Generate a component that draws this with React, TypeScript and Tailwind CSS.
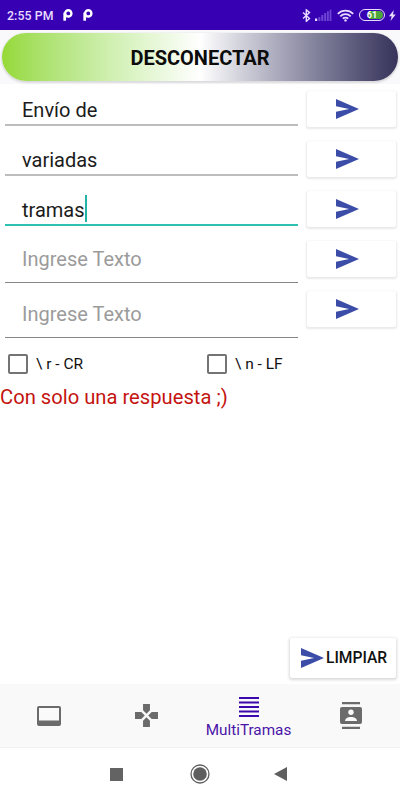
import type { ReactNode } from 'react'

type Field = {
  text: string
  state: 'filled' | 'focused' | 'empty'
  box: string
}

const fields: Field[] = [
  { text: 'Envío de', state: 'filled', box: 'h-[42px] pt-[9px] border-b-2 border-[#bdbdbd]' },
  { text: 'variadas', state: 'filled', box: 'h-[50px] pt-[17px] border-b-2 border-[#bdbdbd]' },
  { text: 'tramas', state: 'focused', box: 'h-[50px] pt-[17px] border-b-2 border-[#2fc0b4]' },
  { text: 'Ingrese Texto', state: 'empty', box: 'h-[57px] pt-[16px] border-b border-[#868686]' },
  { text: 'Ingrese Texto', state: 'empty', box: 'h-[55px] pt-[14px] border-b border-[#868686]' },
]

function SendIcon() {
  return (
    <svg className="block shrink-0" width="23" height="20" viewBox="2 3 21 18" preserveAspectRatio="none" fill="#3c4da8">
      <path d="M2 21 23 12 2 3v6.500l12 2.500-12 2.500z" />
    </svg>
  )
}

function AppBadge() {
  return (
    <svg width="10" height="12" viewBox="0 0 10 12" fill="none" stroke="#fff">
      <circle cx="5.3" cy="4.4" r="3.1" strokeWidth="2.4" />
      <path d="M1.7 3.6v8.1" strokeWidth="2.7" />
    </svg>
  )
}

function StatusBar() {
  return (
    <header className="flex h-[30px] items-center bg-[#3700b3] pl-[7px] pr-[4px] text-[#e9dcff]">
      <span className="w-[56px] whitespace-nowrap pt-[2px] text-[12.3px] font-medium tracking-[0.1px]">2:55 PM</span>
      <AppBadge />
      <span className="w-[10px]" />
      <AppBadge />
      <div className="ml-auto flex items-center">
        <svg width="9" height="13" viewBox="0 0 9 13" fill="none" stroke="currentColor" strokeWidth="1.4">
          <path d="m1 3.5 6.500 6-3.200 2.800V.8l3.200 2.800L1 9.500" />
        </svg>
        <svg className="ml-[4px]" width="17" height="12" viewBox="0 0 17 12" fill="#6e45d2">
          <path d="M0 9.5h2.2V12H0z" fill="#e9dcff" />
          <path d="M3.4 8h2v4h-2zM6.3 6h2v6h-2zM9.2 4h2v8h-2zM12 2.3h1.8V12H12zM14.6.8h1.8V12h-1.8z" />
        </svg>
        <svg className="ml-[5px]" width="17" height="13" viewBox="0 0 17 13" fill="none" stroke="currentColor" strokeWidth="1.8">
          <path d="M.8 4.8a11 11 0 0 1 15.4 0M3.3 7.3a7.4 7.4 0 0 1 10.4 0M5.8 9.7a3.8 3.8 0 0 1 5.4 0" />
          <circle cx="8.5" cy="11.4" r="1.2" fill="currentColor" stroke="none" />
        </svg>
        <span className="ml-[5px] flex h-[12px] w-[26px] items-center justify-center rounded-full border border-[#e9dcff] p-px text-[9px] font-bold leading-none text-white">
          <span className="flex h-full w-full items-center justify-center rounded-full bg-linear-to-r from-[#3700b3] from-35% to-[#4da63b] to-35%">
            61
          </span>
        </span>
        <svg className="ml-[4px]" width="7" height="11" viewBox="0 0 7 11" fill="currentColor">
          <path d="M4.8 0 0 6.2h2.7L1.5 11 6.7 4.4H4z" />
        </svg>
      </div>
    </header>
  )
}

function Check({ label }: { label: string }) {
  return (
    <label className="flex items-center whitespace-pre text-[15.5px]">
      <span className="mr-[8px] size-5 rounded-[2px] border-2 border-[#747474]" />
      <span className="pt-[2px]">{label}</span>
    </label>
  )
}

function Tab({ children }: { children: ReactNode }) {
  return <div className="flex h-full flex-col items-center justify-center">{children}</div>
}

export default function App() {
  return (
    <div className="flex h-[800px] w-[400px] flex-col overflow-hidden bg-white font-[Roboto,sans-serif] text-[#111]">
      <StatusBar />

      <div className="h-[54px] bg-[#f9f9fb] px-[2px] pt-[3px]">
        <button className="block h-[48px] w-full rounded-full bg-linear-to-r from-[#96d935] via-white to-[#37335a] pt-[2px] text-[20px] font-bold text-[#0c0c0c] shadow-[0_1px_2px_1px_rgba(0,0,0,0.12)]">
          DESCONECTAR
        </button>
      </div>

      <main className="flex flex-1 flex-col">
        <div className="flex justify-between pl-[5px] pr-[4px]">
          {/* Text inputs */}
          <div className="w-[293px]">
            {fields.map((f, i) => (
              <div key={i} className={`flex items-start pl-[17px] text-[20px] leading-[34px] ${f.box}`}>
                <span className={f.state === 'empty' ? 'text-[#9b9b9b]' : 'text-[#1c1c1c]'}>{f.text}</span>
                {f.state === 'focused' && <span className="mt-[2px] h-[27px] w-[2px] bg-[#26b3a7]" />}
              </div>
            ))}
          </div>
          {/* Send buttons */}
          <div className="flex w-[89px] flex-col gap-[14px] pt-[7px]">
            {fields.map((_, i) => (
              <button
                key={i}
                className="flex h-[36px] items-center rounded-[2px] bg-white pl-[29px] shadow-[0_1px_2px_1px_rgba(0,0,0,0.09)]"
              >
                <SendIcon />
              </button>
            ))}
          </div>
        </div>

        <div className="grid h-[46px] grid-cols-[199px_1fr] items-center pl-[8px] pt-[6px]">
          <Check label="\ r - CR" />
          <Check label="\ n - LF" />
        </div>

        <p className="text-[20.2px] leading-[27px] text-[#c41411]">Con solo una respuesta ;)</p>

        <button className="mb-[6px] ml-auto mr-[4px] mt-auto flex h-[40px] w-[106px] items-center gap-[2px] rounded-[2px] bg-white pl-[11px] text-[15.6px] font-medium shadow-[0_1px_3px_1px_rgba(0,0,0,0.15)]">
          <SendIcon />
          <span className="pt-[2px]">LIMPIAR</span>
        </button>
      </main>

      {/* Tabs */}
      <nav className="grid h-[63px] grid-cols-[98px_97px_107px_98px] bg-[#f9f9f9] text-[#6b6b6b]">
        <Tab>
          <svg width="24" height="20" viewBox="0 0 24 20">
            <rect width="24" height="20" rx="2" fill="currentColor" />
            <path d="M2 2h20v12.5H2z" fill="#fafafa" />
          </svg>
        </Tab>
        <Tab>
          <svg width="23" height="23" viewBox="2 2 20 20" fill="currentColor">
            <path d="M15 7.5V2H9v5.500l3 3zM7.500 9H2v6h5.500l3-3zM9 16.500V22h6v-5.500l-3-3zM16.500 9l-3 3 3 3H22V9z" />
          </svg>
        </Tab>
        <Tab>
          <svg className="mt-[7px]" width="20" height="20" viewBox="0 0 20 20" fill="#3a08ac">
            <path d="M0 0h20v2H0zM0 4.500h20v2H0zM0 9h20v2H0zM0 13.500h20v2H0zM0 18h20v2H0z" />
          </svg>
          <span className="mt-[2px] text-[15.3px] leading-[22px] text-[#4b14a8]">MultiTramas</span>
        </Tab>
        <Tab>
          <svg width="22" height="27" viewBox="0 0 22 27" fill="currentColor">
            <path d="M2 0h18v2.200H2zM2 24.800h18V27H2z" />
            <rect y="5" width="22" height="17" rx="2" />
            <circle cx="11" cy="10.200" r="2.700" fill="#fafafa" />
            <path d="M5 19c0-5.500 12-5.500 12 0z" fill="#fafafa" />
          </svg>
        </Tab>
      </nav>

      {/* System navigation */}
      <footer className="flex h-[53px] items-center border-t border-[#f1f1f1] pl-[110px] text-[#5f5f5f]">
        <span className="size-[13px] bg-[#636363]" />
        <svg className="ml-[67px]" width="20" height="20" viewBox="0 0 20 20">
          <circle cx="10" cy="10" r="9" fill="none" stroke="currentColor" strokeWidth="1.300" />
          <circle cx="10" cy="10" r="6.800" fill="currentColor" />
        </svg>
        <svg className="ml-[64px]" width="13" height="14" viewBox="0 0 13 14" fill="currentColor">
          <path d="M13 0v14L0 7z" />
        </svg>
      </footer>
    </div>
  )
}
